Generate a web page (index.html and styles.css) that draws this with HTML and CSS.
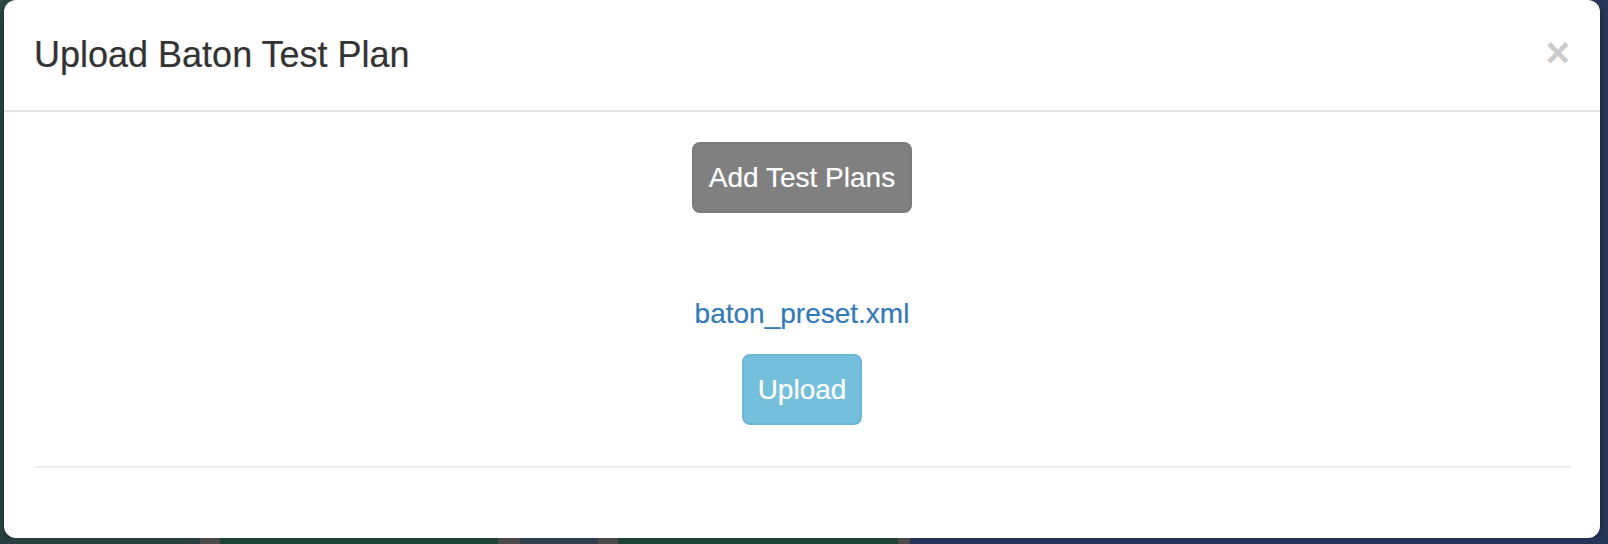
FILE: index.html
```html
<!DOCTYPE html>
<html>
<head>
<meta charset="utf-8">
<link rel="stylesheet" href="styles.css">
</head>
<body>
<div class="backdrop">
  <div class="modal">
    <div class="modal-header">
      <h4 class="modal-title">Upload Baton Test Plan</h4>
      <span class="close">&times;</span>
    </div>
    <div class="modal-body">
      <div class="btn btn-add">Add Test Plans</div>
      <a class="file-link">baton_preset.xml</a>
      <div class="btn btn-upload">Upload</div>
      <div class="divider"></div>
    </div>
  </div>
  <div class="strip">
    <span class="seg s-dark" style="width:200px"></span>
    <span class="seg s-grey" style="width:20px"></span>
    <span class="seg s-green" style="width:278px"></span>
    <span class="seg s-grey" style="width:22px"></span>
    <span class="seg s-slate" style="width:78px"></span>
    <span class="seg s-grey" style="width:20px"></span>
    <span class="seg s-green" style="width:280px"></span>
    <span class="seg s-grey" style="width:12px"></span>
    <span class="seg s-navy" style="width:698px"></span>
  </div>
</div>
</body>
</html>
```
FILE: styles.css
```css
* { box-sizing: border-box; }
html, body {
  margin: 0;
  padding: 0;
  width: 1608px;
  height: 544px;
  overflow: hidden;
  font-family: "Liberation Sans", Arial, Helvetica, sans-serif;
}
.backdrop {
  width: 1608px;
  height: 544px;
  background: linear-gradient(90deg, #2d4a46 0%, #2b4744 40%, #283d52 75%, #283a5e 100%);
  padding: 0 8px 0 4px;
  display: flex;
  flex-direction: column;
}
.modal {
  width: 1596px;
  height: 538px;
  flex: none;
  background: #fff;
  border-radius: 12px;
  box-shadow: 0 4px 12px rgba(0,0,0,0.5);
  display: flex;
  flex-direction: column;
}
.modal-header {
  height: 112px;
  padding: 30px;
  border-bottom: 2px solid #e5e5e5;
  display: flex;
  justify-content: space-between;
  align-items: flex-start;
}
.modal-title {
  margin: 0;
  font-size: 36px;
  line-height: 50px;
  font-weight: normal;
  color: #333;
  -webkit-text-stroke: 0.2px #333;
}
.close {
  font-size: 42px;
  line-height: 50px;
  font-weight: bold;
  color: #000;
  opacity: 0.2;
  margin-top: -2px;
}
.modal-body {
  padding: 30px 30px 0;
  display: flex;
  flex-direction: column;
  align-items: center;
}
.btn {
  height: 71px;
  border-radius: 8px;
  color: #fff;
  font-size: 28px;
  line-height: 67px;
  text-align: center;
  border: 2px solid transparent;
  -webkit-text-stroke: 0.2px #fff;
}
.btn-add {
  width: 220px;
  background: #808080;
  border-color: #7a7a7a;
}
.file-link {
  margin-top: 82px;
  font-size: 28px;
  line-height: 38px;
  color: #337ab7;
  -webkit-text-stroke: 0.2px #337ab7;
}
.btn-upload {
  margin-top: 21px;
  width: 120px;
  background: #74bfdb;
  border-color: #6cb6d4;
}
.divider {
  align-self: stretch;
  margin-top: 41px;
  height: 2px;
  background: #eeeeee;
}
.strip {
  display: flex;
  height: 6px;
  margin-left: -4px;
  margin-right: -8px;
}
.seg { display: block; height: 6px; flex: none; }
.s-dark { background: #27403f; }
.s-grey { background: #4a4a4a; }
.s-green { background: #1f4236; }
.s-slate { background: #2f3f4e; }
.s-navy { background: #243458; }
```
